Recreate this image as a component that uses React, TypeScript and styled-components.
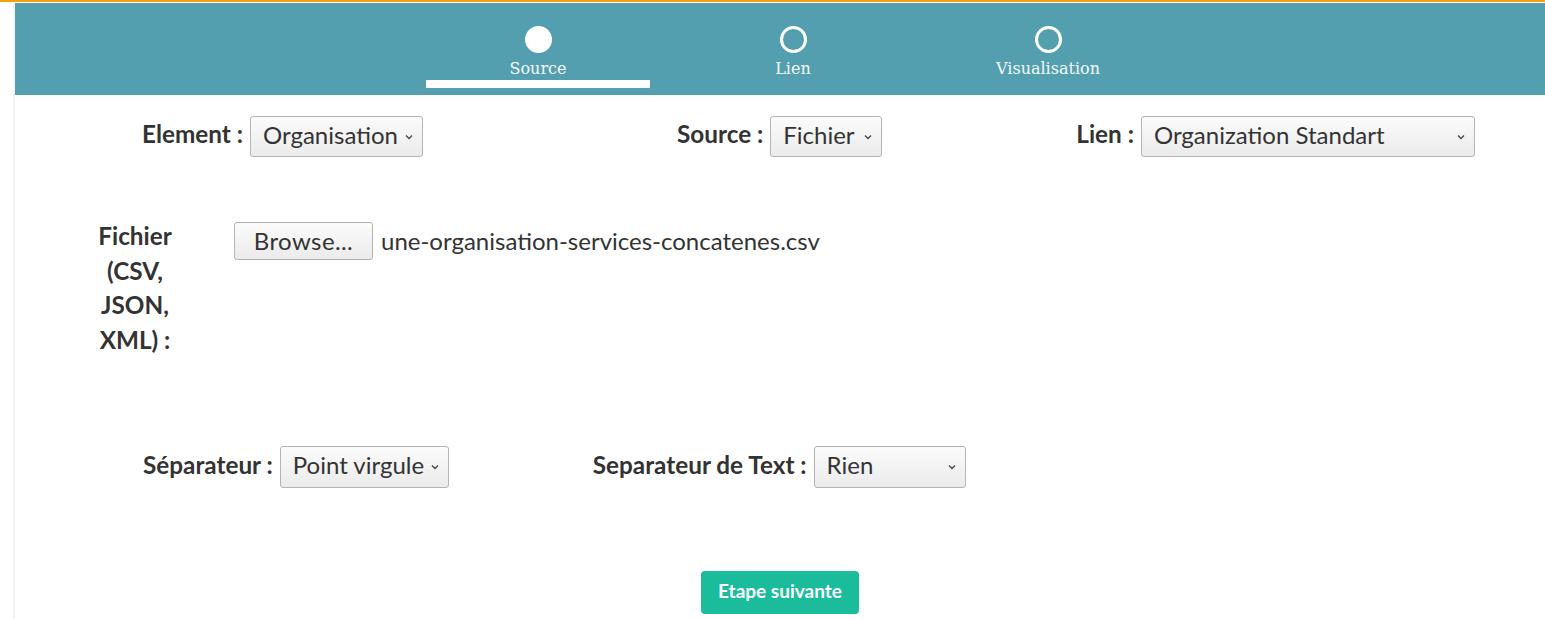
import React from "react";
import styled, { createGlobalStyle } from "styled-components";

const GlobalStyle = createGlobalStyle`
  html, body { margin: 0; padding: 0; background: #fff; }
  body { font-family: Lato, "Liberation Sans", sans-serif; color: #333; }
  * { box-sizing: border-box; }
`;

const TopLine = styled.div`
  height: 2px;
  background: #f5a00c;
  margin-bottom: 1px;
`;

const Page = styled.div`
  margin-left: 13px;
  border-left: 2px solid #f4f4f4;
  min-height: 616px;
`;

const Header = styled.div`
  height: 92px;
  background: #539fb0;
  display: flex;
  justify-content: center;
  padding-left: 26px;
`;

const Step = styled.div`
  width: 255px;
  display: flex;
  flex-direction: column;
  align-items: center;
  padding-top: 23px;
`;

const Dot = styled.div<{ $filled?: boolean }>`
  width: 27px;
  height: 27px;
  border-radius: 50%;
  border: 3px solid #fff;
  background: ${(p) => (p.$filled ? "#fff" : "transparent")};
`;

const StepLabel = styled.div`
  font-family: "DejaVu Serif", serif;
  font-size: 16px;
  color: #f4f8f9;
  margin-top: 6px;
  line-height: 19px;
`;

const Underline = styled.div<{ $active?: boolean }>`
  width: 224px;
  height: 8px;
  margin-top: 2px;
  background: ${(p) => (p.$active ? "#fff" : "transparent")};
`;

const Content = styled.div`
  display: flex;
  flex-direction: column;
`;

const Row = styled.div<{ $top: number; $left: number }>`
  display: flex;
  align-items: center;
  margin-top: ${(p) => p.$top}px;
  padding-left: ${(p) => p.$left}px;
`;

const Group = styled.div<{ $gap?: number }>`
  display: flex;
  align-items: center;
  gap: 7px;
  margin-left: ${(p) => p.$gap ?? 0}px;
`;

const Label = styled.span`
  font-weight: 700;
  font-size: 24.3px;
  color: #333;
  white-space: nowrap;
  padding-bottom: 6px;
`;

const SelectBox = styled.div<{ $width: number; $height?: number }>`
  width: ${(p) => p.$width}px;
  height: ${(p) => p.$height ?? 41}px;
  border: 1px solid #b4b4b4;
  border-radius: 3px;
  background: linear-gradient(#fbfbfb, #ebebeb);
  display: flex;
  align-items: center;
  justify-content: space-between;
  padding: 0 9px 5px 12px;
  font-size: 24px;
  color: #333;
  white-space: nowrap;
`;

const ChevronIcon = styled.svg`
  margin-top: 5px;
`;

const Chevron = () => (
  <ChevronIcon width="8" height="6" viewBox="0 0 8 6">
    <path d="M1 1.5 L4 4.5 L7 1.5" fill="none" stroke="#444" strokeWidth="1.3" />
  </ChevronIcon>
);

const Select = ({ value, width, height }: { value: string; width: number; height?: number }) => (
  <SelectBox $width={width} $height={height}>
    <span>{value}</span>
    <Chevron />
  </SelectBox>
);

const FileRow = styled.div`
  display: flex;
  align-items: flex-start;
  margin-top: 65px;
  padding-left: 70px;
`;

const FileLabel = styled.div`
  width: 100px;
  margin-top: -3px;
  text-align: center;
  font-weight: 700;
  font-size: 24.3px;
  line-height: 34.5px;
  color: #333;
`;

const BrowseButton = styled.div`
  margin-left: 49px;
  width: 139px;
  height: 38px;
  border: 1px solid #b4b4b4;
  border-radius: 3px;
  background: linear-gradient(#fbfbfb, #ebebeb);
  display: flex;
  align-items: center;
  justify-content: center;
  padding-bottom: 2px;
  font-size: 24px;
  letter-spacing: 0.4px;
  color: #333;
`;

const FileName = styled.span`
  margin-left: 8px;
  font-size: 24px;
  line-height: 38px;
  color: #333;
`;

const Footer = styled.div`
  display: flex;
  justify-content: center;
  margin-top: 83px;
`;

const NextButton = styled.div`
  height: 43px;
  width: 158px;
  justify-content: center;
  border-radius: 4px;
  background: #1abc9c;
  color: #fff;
  font-weight: 700;
  font-size: 19px;
  display: flex;
  align-items: center;
  padding-bottom: 4px;
`;

export default function App() {
  return (
    <>
      <GlobalStyle />
      <TopLine />
      <Page>
        <Header>
          <Step>
            <Dot $filled />
            <StepLabel>Source</StepLabel>
            <Underline $active />
          </Step>
          <Step>
            <Dot />
            <StepLabel>Lien</StepLabel>
            <Underline />
          </Step>
          <Step>
            <Dot />
            <StepLabel>Visualisation</StepLabel>
            <Underline />
          </Step>
        </Header>
        <Content>
          <Row $top={21} $left={127}>
            <Group>
              <Label>Element :</Label>
              <Select value="Organisation" width={173} />
            </Group>
            <Group $gap={254}>
              <Label>Source :</Label>
              <Select value="Fichier" width={112} />
            </Group>
            <Group $gap={194}>
              <Label>Lien :</Label>
              <Select value="Organization Standart" width={334} />
            </Group>
          </Row>
          <FileRow>
            <FileLabel>Fichier (CSV, JSON, XML) :</FileLabel>
            <BrowseButton>Browse...</BrowseButton>
            <FileName>une-organisation-services-concatenes.csv</FileName>
          </FileRow>
          <Row $top={89} $left={128}>
            <Group>
              <Label>Séparateur :</Label>
              <Select value="Point virgule" width={169} height={42} />
            </Group>
            <Group $gap={144}>
              <Label>Separateur de Text :</Label>
              <Select value="Rien" width={152} height={42} />
            </Group>
          </Row>
          <Footer>
            <NextButton>Etape suivante</NextButton>
          </Footer>
        </Content>
      </Page>
    </>
  );
}
